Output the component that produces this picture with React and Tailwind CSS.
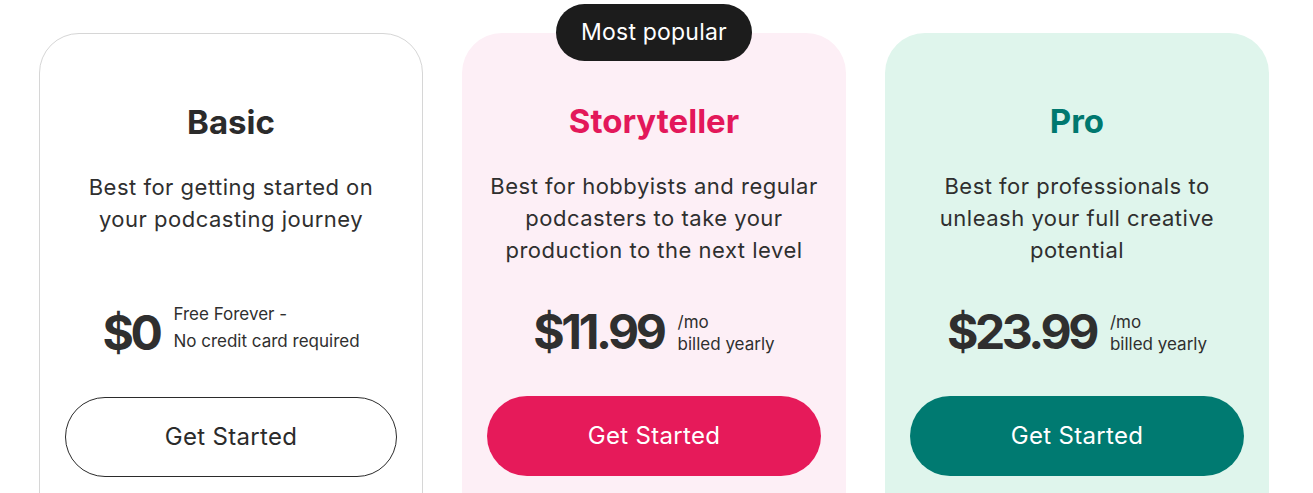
import React from "react";

const plans = [
  {
    name: "Basic",
    desc: ["Best for getting started on", "your podcasting journey"],
    price: "$0",
    note: ["Free Forever -", "No credit card required"],
    card: "bg-white border border-[#d6d6d6]",
    title: "text-[#2b2b2b]",
    button: "bg-white border-[1.5px] border-[#2b2b2b] text-[#2b2b2b]",
  },
  {
    name: "Storyteller",
    desc: ["Best for hobbyists and regular", "podcasters to take your", "production to the next level"],
    price: "$11.99",
    note: ["/mo", "billed yearly"],
    card: "bg-[#fdeff6]",
    title: "text-[#e3185a]",
    button: "bg-[#e61a5a] text-white",
    popular: true,
  },
  {
    name: "Pro",
    desc: ["Best for professionals to", "unleash your full creative", "potential"],
    price: "$23.99",
    note: ["/mo", "billed yearly"],
    card: "bg-[#dff5ec]",
    title: "text-[#00786f]",
    button: "bg-[#007a71] text-white",
  },
];

const PlanCard = ({ plan }) => {
  const free = plan.price === "$0";
  return (
    <div className={`relative w-[384px] h-[520px] rounded-[40px] px-[25px] pt-[68px] ${plan.card}`}>
      {plan.popular && (
        <div className="absolute left-1/2 -translate-x-1/2 -top-[29px] h-[57px] w-[196px] rounded-full bg-[#1c1c1c] text-white text-[23px] tracking-[0.2px] flex items-center justify-center">
          Most popular
        </div>
      )}
      <h2 className={`text-center text-[33px] leading-[40px] font-bold ${plan.title}`}>{plan.name}</h2>
      <div className="mt-[29px] h-[96px] text-center text-[22px] tracking-[0.5px] leading-[32px] text-[#2f2f2f]">
        {plan.desc.map((l) => (
          <p key={l}>{l}</p>
        ))}
      </div>
      <div className="mt-[36px] h-[60px] flex items-center justify-center gap-[14px] text-[#2f2f2f]">
        <span className="text-[48px] font-bold tracking-[-3.4px] leading-none">{plan.price}</span>
        <div className={`text-[17px] ${free ? "leading-[27px] -mt-[10px]" : "leading-[22px] mt-[2px]"}`}>
          <p>{plan.note[0]}</p>
          <p>{plan.note[1]}</p>
        </div>
      </div>
      <button className={`mt-[34px] w-full h-[80px] rounded-full text-[24px] tracking-[0.3px] ${plan.button}`}>
        Get Started
      </button>
    </div>
  );
};

export default function App() {
  return (
    <div className="h-[493px] overflow-hidden bg-white font-['Inter',sans-serif]">
      <div className="flex gap-[39px] pl-[39px] pt-[33px]">
        {plans.map((p) => (
          <PlanCard key={p.name} plan={p} />
        ))}
      </div>
    </div>
  );
}
